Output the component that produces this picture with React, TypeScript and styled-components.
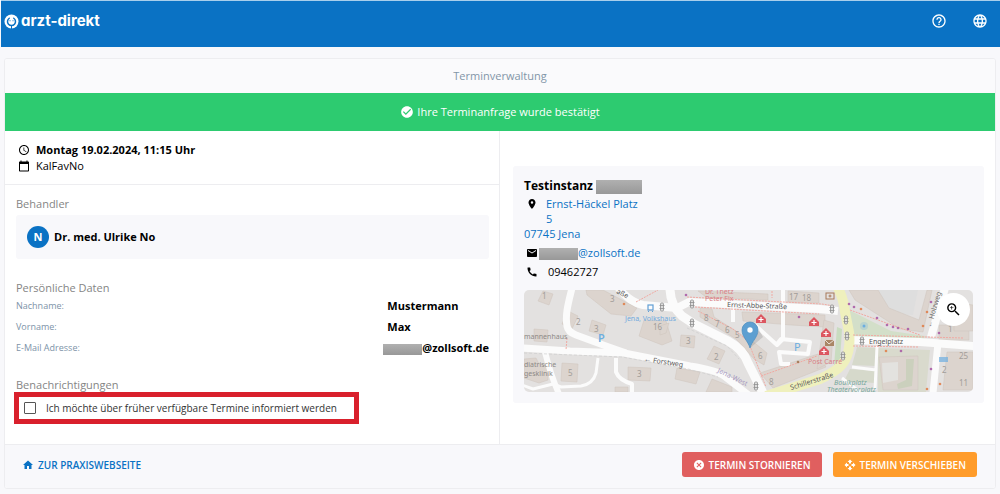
import React from "react";
import styled, { createGlobalStyle } from "styled-components";
import {
  MdAccessTime,
  MdCalendarToday,
  MdCall,
  MdCancel,
  MdCheckCircle,
  MdEmail,
  MdHelpOutline,
  MdHome,
  MdLanguage,
  MdLocationOn,
  MdOpenWith,
  MdZoomIn,
} from "react-icons/md";

const blue = "#0a72c4";
const line = "#ededf0";
const panel = "#f8f8fb";

const GlobalStyle = createGlobalStyle`
  *, *::before, *::after { box-sizing: border-box; }
  body {
    margin: 0;
    background: ${panel};
    color: #000;
    font: 11px/16px "Open Sans", "Noto Sans", sans-serif;
  }
  h1, h2, p, dl, dd, address { margin: 0; font: inherit; }
  svg { flex: none; }
`;

const Header = styled.header`
  display: flex;
  align-items: center;
  justify-content: space-between;
  height: 47px;
  margin-left: 1px;
  padding: 0 12px 6px 3px;
  border-top: 1px solid #a9cfec;
  background: ${blue};
  color: #fff;
`;

const Brand = styled.a`
  display: flex;
  align-items: center;
  gap: 2px;
  color: inherit;
  text-decoration: none;
  font: 700 15px/20px Inter, "Open Sans", sans-serif;
  font-feature-settings: "cv11";
`;

const HeaderActions = styled.nav`
  display: flex;
  gap: 25px;
`;

const IconButton = styled.button`
  display: flex;
  padding: 0;
  border: 0;
  background: none;
  color: inherit;
  font-size: 16px;
`;

const Card = styled.main`
  margin: 11px 4px 5px 4px;
  border: 1px solid ${line};
  border-radius: 3px;
  background: #fff;
  overflow: hidden;
`;

const CardTitle = styled.h1`
  padding: 9px 0;
  background: #fafafc;
  color: #8296a8;
  text-align: center;
`;

const Banner = styled.div`
  display: flex;
  align-items: center;
  justify-content: center;
  gap: 3px;
  height: 38px;
  background: #2dcb70;
  color: #fff;
  svg { font-size: 14px; }
`;

const Columns = styled.div`
  display: grid;
  grid-template-columns: 1fr 1fr;
`;

const Details = styled.div`
  border-right: 1px solid ${line};
  padding-bottom: 20px;
`;

const Appointment = styled.div`
  padding: 11px 13px 10px;
  border-bottom: 1px solid ${line};
`;

const AppointmentLine = styled.p<{ $strong?: boolean }>`
  display: flex;
  align-items: center;
  gap: 6px;
  font-weight: ${(p) => (p.$strong ? 700 : 400)};
  svg { font-size: 12px; }
`;

const Section = styled.section<{ $top: number }>`
  padding: ${(p) => p.$top}px 10px 0 11px;
`;

const SectionTitle = styled.h2`
  color: #858585;
  line-height: 15px;
`;

const Doctor = styled.div`
  display: flex;
  align-items: center;
  gap: 5px;
  height: 44px;
  margin-top: 4px;
  padding: 0 11px;
  border-radius: 3px;
  background: ${panel};
  font-weight: 700;
`;

const Avatar = styled.span`
  display: grid;
  place-items: center;
  width: 22px;
  height: 22px;
  border-radius: 50%;
  background: ${blue};
  color: #fff;
`;

const DataList = styled.dl`
  display: grid;
  grid-template-columns: 1fr auto;
  line-height: 21px;
  dt { color: #7d93a8; font-size: 9px; }
  dd { font-weight: 700; white-space: nowrap; }
`;

const Redacted = styled.span<{ $w: number; $h: number; $pull?: number }>`
  display: inline-block;
  width: ${(p) => p.$w}px;
  height: ${(p) => p.$h}px;
  margin-left: ${(p) => -(p.$pull ?? 0)}px;
  background: linear-gradient(#b0b0b0, #989898);
  vertical-align: middle;
`;

const Highlight = styled.div`
  display: flex;
  width: fit-content;
  margin-left: -2px;
  padding: 4px 17px 4px 5px;
  border: 5px solid #d9202c;
`;

const CheckLabel = styled.label`
  display: flex;
  align-items: center;
  gap: 10px;
  height: 14px;
  color: #333;
  font-size: 10px;
  white-space: nowrap;
`;

const Checkbox = styled.input`
  appearance: none;
  width: 12px;
  height: 12px;
  margin: 0;
  border: 1px solid #555;
  border-radius: 1px;
  &:checked { background: ${blue}; }
`;

const Location = styled.div`
  padding: 35px 11px 0 13px;
`;

const LocationCard = styled.section`
  padding: 11px;
  border-radius: 3px;
  background: ${panel};
`;

const PracticeName = styled.h2`
  margin-bottom: 1px;
  font-size: 12px;
  font-weight: 700;
  line-height: 18px;
`;

const Address = styled.address`
  display: grid;
  grid-template-columns: 16px 96px;
  column-gap: 6px;
  margin-bottom: 2px;
  line-height: 15px;
  svg { justify-self: center; margin-top: 2px; font-size: 12px; }
`;

const Link = styled.a`
  color: ${blue};
  text-decoration: none;
`;

const CityLink = styled(Link)`
  grid-column: 1 / -1;
`;

const Contact = styled.p<{ $gap: number }>`
  display: flex;
  align-items: center;
  gap: ${(p) => p.$gap}px;
  height: 19px;
  padding-left: 2px;
  svg { font-size: 12px; }
`;

const MapFrame = styled.div`
  position: relative;
  height: 102px;
  margin-top: 9px;
  border-radius: 5px;
  overflow: hidden;
`;

const MapDrawing = styled.svg`
  display: block;
  width: 100%;
  height: 100%;
`;

const ZoomButton = styled.button`
  position: absolute;
  top: 3px;
  right: 3px;
  display: grid;
  place-items: center;
  width: 33px;
  height: 33px;
  padding: 0;
  border: 0;
  border-radius: 50%;
  background: #fff;
  font-size: 17px;
  color: #000;
`;

const Footer = styled.footer`
  display: flex;
  align-items: center;
  gap: 11px;
  padding: 7px 18px 11px 17px;
  border-top: 1px solid ${line};
  background: ${panel};
`;

const HomeLink = styled(Link)`
  display: flex;
  align-items: center;
  gap: 4px;
  margin-right: auto;
  font-size: 10px;
  font-weight: 600;
  svg { font-size: 12px; }
`;

const ActionButton = styled.button<{ $color: string }>`
  display: flex;
  align-items: center;
  gap: 4px;
  height: 25px;
  padding: 0 11px;
  border: 0;
  border-radius: 3px;
  background: ${(p) => p.$color};
  color: #fff;
  font: 600 10px/16px "Open Sans", "Noto Sans", sans-serif;
  svg { font-size: 12px; }
`;

const Logo = () => (
  <svg width="15" height="15" viewBox="0 0 30 30" aria-hidden="true">
    <circle cx="15" cy="15" r="14" fill="#fff" />
    <path
      d="M10.500 8.500a8 8 0 1 0 9 0"
      fill="none"
      stroke={blue}
      strokeWidth="3"
      strokeLinecap="round"
    />
    <path d="M15 23v7" stroke={blue} strokeWidth="2" />
    <path d="M11 13.500h2M17 13.500h2" stroke={blue} strokeWidth="2" />
  </svg>
);

const buildings = [
  "M19 1l10 3-4 11-11-4z",
  "M44 21l10 5-6 13-10-5z",
  "M68 30l14 5-3 10-14-4z",
  "M10 39l14 1-1 12-13-1z",
  "M38 73l16 1-1 18-16-1z",
  "M104 77l23 1-1 13-22-1z",
  "M91 97h13v5H91z",
  "M62 0h17l34 18-6 8-20-2-24-19z",
  "M120 30l22 1 6 20-10 4-23-9z",
  "M0 69l12-1 3 6 9 0v16l-9 3-15-5z",
  "M136 36l9-3-3 10-6 2z",
  "M157 45l14 1-1 12-14-2z",
  "M190 56l11 5-6 13-12-5z",
  "M153 78l23 4-4 12-21-5z",
  "M188 89l20 8v5h-26z",
  "M176 18l12 1 2 8 42 27 11 9-3 12-10-6-18-20-36-22z",
  "M218 22l83 3v12l-34-2-48-4z",
  "M264 1l31 2v10l-31-1z",
  "M174 1l70 3v6l-62-3z",
  "M236 83l58-19 8 13-53 21z",
  "M300 30l10 3-3 39-14 7z",
  "M325 0l29 0 11 18 30 12 8-30 5 0-9 42-23-3-45-29z",
  "M415 35h30v15h-30z",
  "M430 12l19 3v26h-19z",
  "M355 67l39-1v34h-35z",
  "M423 62h26v38h-30z",
];

const whiteRoads: [string, number][] = [
  ["M48-2C44 14 41 25 43 36q1 6 9 9l30 11 20 7", 7],
  ["M-2 58l48 3 54 2 46 9 20 4q26 4 34 10l26 20", 7],
  ["M21 62q6 24 14 42", 6],
  ["M-2 95l11 4 20-5 8 3 20-1q12-2 15-13l2-15", 3],
  ["M92 68v14q3 8 16 12v10", 4],
  ["M94-3q11 15 25 18l34 3 12-6 131 7 18 2", 8],
  ["M146-2q0 17 12 28l12 8 34 17q15 8 20 22l18 36", 9],
  ["M259-2v51l-6 6-22-20", 4],
  ["M253 54l4-5 29 3-2 12-29-2 2 12 9 0", 4],
  ["M209 12v20", 4],
  ["M325 50l71 2 54 4", 8],
  ["M421-2l-14 49", 8],
  ["M414 53l-5 50", 7],
  ["M353 56l-2 44M328 77l24 3M318 88l18 14", 3],
];

const houseNumbers: [number, number, string][] = [
  [18, 9, "1"], [52, 35, "2"], [70, 42, "3"], [86, 12, "3"], [44, 86, "5"],
  [113, 87, "3"], [129, 40, "16"], [162, 54, "3"], [190, 70, "2"],
  [180, 31, "8"], [191, 37, "7"], [201, 43, "6"], [211, 48, "5"],
  [234, 69, "6"], [245, 95, "8"], [265, 10, "17"], [278, 11, "18"],
  [424, 42, "1"], [435, 69, "25"], [418, 83, "2"], [435, 96, "11"],
];

const shops: [number, number, string][] = [
  [162, 5, "#a44ea0"], [275, 27, "#a44ea0"], [325, 14, "#a44ea0"],
  [330, 17, "#a44ea0"], [337, 19, "#e0763c"], [353, 28, "#a44ea0"],
  [363, 35, "#a44ea0"], [369, 37, "#a44ea0"], [374, 38, "#a44ea0"],
  [384, 39, "#a44ea0"], [403, 22, "#e0763c"], [407, 12, "#a44ea0"],
  [399, 36, "#e0763c"], [362, 61, "#e0763c"], [377, 61, "#a44ea0"],
  [407, 79, "#a44ea0"], [403, 99, "#e0763c"], [416, 94, "#e0763c"],
  [100, 14, "#e0763c"], [274, 72, "#9a6b45"], [415, 43, "#a44ea0"],
];

const signals: [number, number][] = [
  [138, 17], [168, 14], [168, 33], [232, 96], [308, 19],
  [322, 30], [323, 46], [319, 66], [338, 51],
];

const medics: [number, number][] = [[237, 29], [290, 32], [302, 43], [300, 61]];

const CityMap = () => (
  <MapDrawing
    viewBox="0 0 449 102"
    preserveAspectRatio="xMidYMid slice"
    role="img"
    aria-label="Karte"
    fontFamily="'Noto Sans', sans-serif"
  >
    <rect width="449" height="102" fill="#e3e1e0" />
    <path d="M325 20l42 21 34 5-1 5-75-5z" fill="#d3dfc9" />
    <path d="M333 57l19 1v18l-24-1zM326 79l25 2v12l-31-2z" fill="#d6d9cb" />
    <path d="M354 58l52 2-4 42h-48z" fill="#d9dacd" />
    <path d="M313 37l5 2-2 31-6 6z" fill="#c9dcc0" />
    <path d="M352 0h42l-5 25-19-1-8-11z" fill="#dedede" />
    {buildings.map((d) => (
      <path key={d} d={d} fill="#dcd4ce" stroke="#cfc4bc" strokeWidth="0.5" />
    ))}
    <path d="M358 73l16-1v18l-15 3z" fill="#e3e2df" />
    <path d="M382 69l8 0-2 27-14 3-1-5 9-4z" fill="#cbd0bd" />
    {whiteRoads.map(([d, w]) => (
      <path key={d} d={d} fill="none" stroke="#fbfbfb" strokeWidth={w} strokeLinejoin="round" />
    ))}
    <path
      d="M314-2q6 12 7 24l4 20q2 17-4 28-5 10-25 19l-54 17"
      fill="none"
      stroke="#eff0bd"
      strokeWidth="10"
    />
    <g fill="none" stroke="#f0a9a2" strokeWidth="1" strokeDasharray="2 1">
      <path d="M43 48l-1 12M163 7l135 7 12 2M174 21l35 18 15 12 18 46M171 17l124 7M237 86l56-20" />
      <path d="M329 45l110 3M329 56l65 1M326 20l70 25M248 1v7M112 12l22-12" />
    </g>
    <path
      d="M0 63l98 4 66 12 30 8M163 38l40 18 12 13"
      fill="none"
      stroke="#cfcfcf"
      strokeWidth="0.7"
      strokeDasharray="3 2"
    />
    <g fontSize="8" fill="#a29d99">
      {houseNumbers.map(([x, y, n]) => (
        <text key={`${x}-${y}`} x={x} y={y}>{n}</text>
      ))}
    </g>
    {shops.map(([x, y, c]) => (
      <circle key={`${x}-${y}`} cx={x} cy={y} r="1.300" fill={c} opacity="0.8" />
    ))}
    {signals.map(([x, y]) => (
      <g key={`${x}-${y}`} fill="#ddd" stroke="#8f8f8f" strokeWidth="0.8">
        <rect x={x - 1.5} y={y - 4} width="3" height="8" rx="1" />
        <path d={`M${x - 2.500} ${y - 1.500}h5M${x - 2.500} ${y + 1.500}h5`} />
      </g>
    ))}
    {medics.map(([x, y]) => (
      <g key={`${x}-${y}`}>
        <path d={`M${x - 5} ${y + 4}v-4l5-5 5 5v4z`} fill="#dc5660" />
        <path d={`M${x} ${y - 2}v5M${x - 2.500} ${y + 0.500}h5`} stroke="#fff" strokeWidth="1.200" />
      </g>
    ))}
    <g fill="none" stroke="#a87958" strokeWidth="1">
      <rect x="302" y="3" width="8" height="6" />
      <circle cx="306" cy="6" r="1" />
    </g>
    <path d="M301 50h9v6h-9z" fill="#a98665" />
    <path d="M301 50l4 4 5-4" fill="none" stroke="#e9dfd6" />
    <g fill="none" stroke="#619fd5" strokeWidth="1.200">
      <rect x="124" y="15" width="5" height="5" />
      <path d="M124 21.500h1M128 21.500h1" />
    </g>
    <g fill="#6daee0">
      <circle cx="340" cy="36" r="1.500" />
      <path d="M415 67h9v5h-9z" opacity="0.7" />
      <circle cx="340" cy="36" r="4" opacity="0.25" />
    </g>
    <g fontSize="7" fill="#6b6b6b">
      <text x="0" y="49" fill="#8d8986">mannenhaus</text>
      <text x="0" y="77" fill="#8d8986">diatrische</text>
      <text x="0" y="86" fill="#8d8986">gesklinik</text>
      <text x="203" y="17" fill="#555" transform="rotate(2 203 17)">Ernst-Abbe-Straße</text>
      <text x="120" y="71" fill="#555" transform="rotate(9 120 71)">← Forstweg</text>
      <text x="345" y="54" fill="#555">Engelplatz</text>
      <text x="267" y="100" fill="#555" transform="rotate(-17 267 100)">Schillerstraße</text>
      <text x="92" y="3" fill="#555" transform="rotate(27 92 3)">aße</text>
      <text x="407" y="38" transform="rotate(-74 407 38)">← Holzweg</text>
      <text x="101" y="31" fill="#72aade">Jena, Volkshaus</text>
      <text x="181" y="4" fill="#d97f86">Dr. Thetz</text>
      <text x="181" y="11" fill="#d97f86">Peter Fix</text>
      <text x="284" y="74" fill="#d97f86">Post Carré</text>
      <text x="193" y="82" fill="#a79abf" transform="rotate(26 193 82)">Jena-West</text>
      <text x="310" y="95" fill="#77a79b" fontStyle="italic">Boulkplatz</text>
      <text x="303" y="102" fill="#77a79b" fontStyle="italic">Theatervorplatz</text>
    </g>
    <g fill="#6daee0" fontSize="11">
      <text x="74" y="52" fontWeight="600">P</text>
      <text x="270" y="61">P</text>
    </g>
    <path d="M226 58l13-11-4-7z" fill="#777" opacity="0.25" />
    <path d="M226 58c-2-7-8-11-8-18a8 8 0 0 1 16 0c0 7-6 11-8 18z" fill="#5d9fd1" stroke="#4c8cbd" strokeWidth="0.7" />
    <circle cx="226" cy="40" r="2.700" fill="#fff" />
  </MapDrawing>
);

export default function App() {
  return (
    <>
      <GlobalStyle />
      <Header>
        <Brand href="#">
          <Logo />
          arzt-direkt
        </Brand>
        <HeaderActions>
          <IconButton aria-label="Hilfe"><MdHelpOutline /></IconButton>
          <IconButton aria-label="Sprache"><MdLanguage /></IconButton>
        </HeaderActions>
      </Header>
      <Card>
        <CardTitle>Terminverwaltung</CardTitle>
        <Banner role="status">
          <MdCheckCircle />
          Ihre Terminanfrage wurde bestätigt
        </Banner>
        <Columns>
          <Details>
            <Appointment>
              <AppointmentLine $strong><MdAccessTime />Montag 19.02.2024, 11:15 Uhr</AppointmentLine>
              <AppointmentLine><MdCalendarToday />KalFavNo</AppointmentLine>
            </Appointment>
            <Section $top={11}>
              <SectionTitle>Behandler</SectionTitle>
              <Doctor><Avatar>N</Avatar>Dr. med. Ulrike No</Doctor>
            </Section>
            <Section $top={21}>
              <SectionTitle>Persönliche Daten</SectionTitle>
              <DataList>
                <dt>Nachname:</dt>
                <dd>Mustermann</dd>
                <dt>Vorname:</dt>
                <dd>Max</dd>
                <dt>E-Mail Adresse:</dt>
                <dd><Redacted $w={39} $h={11} $pull={4} />@zollsoft.de</dd>
              </DataList>
            </Section>
            <Section $top={19}>
              <SectionTitle>Benachrichtigungen</SectionTitle>
              <Highlight>
                <CheckLabel>
                  <Checkbox type="checkbox" />
                  Ich möchte über früher verfügbare Termine informiert werden
                </CheckLabel>
              </Highlight>
            </Section>
          </Details>
          <Location>
            <LocationCard>
              <PracticeName>Testinstanz <Redacted $w={46} $h={14} /></PracticeName>
              <Address>
                <MdLocationOn />
                <Link href="#">Ernst-Häckel Platz 5</Link>
                <CityLink href="#">07745 Jena</CityLink>
              </Address>
              <Contact $gap={1}>
                <MdEmail />
                <Link href="#"><Redacted $w={39} $h={12} />@zollsoft.de</Link>
              </Contact>
              <Contact $gap={10}><MdCall />09462727</Contact>
              <MapFrame>
                <CityMap />
                <ZoomButton aria-label="Karte vergrößern"><MdZoomIn /></ZoomButton>
              </MapFrame>
            </LocationCard>
          </Location>
        </Columns>
        <Footer>
          <HomeLink href="#"><MdHome />ZUR PRAXISWEBSEITE</HomeLink>
          <ActionButton $color="#e05f5f"><MdCancel />TERMIN STORNIEREN</ActionButton>
          <ActionButton $color="#ff9c2b"><MdOpenWith />TERMIN VERSCHIEBEN</ActionButton>
        </Footer>
      </Card>
    </>
  );
}
